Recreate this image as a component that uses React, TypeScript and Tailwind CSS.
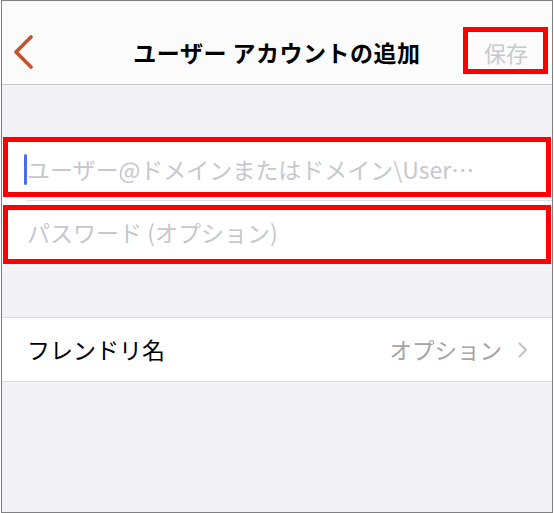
const jp = { fontFamily: '"Noto Sans CJK JP", "Noto Sans", sans-serif' };

function Header() {
  return (
    <div className="h-[84px] shrink-0 bg-[#fbfbfc] border-b border-[#c8c7cc] pt-[20px]">
      <div className="relative h-[62px] flex items-center justify-center">
        <svg
          className="absolute left-[10px] top-[14px]"
          width="24"
          height="34"
          viewBox="0 0 24 34"
          fill="none"
        >
          <polyline
            points="19,2 4,17 19,32"
            stroke="#c4522d"
            strokeWidth="3.6"
            strokeLinecap="round"
            strokeLinejoin="round"
          />
        </svg>
        <h1 className="text-[23px] font-bold text-black tracking-[0.5px]">ユーザー アカウントの追加</h1>
        <span className="absolute right-[24px] text-[22px] text-[#c9c9cc]">保存</span>
      </div>
    </div>
  );
}

export default function App() {
  return (
    <div lang="ja" className="w-[554px] h-[513px] bg-white" style={jp}>
      <div className="relative ml-px w-[552px] h-[513px] border border-[#808080] bg-[#f2f2f7] flex flex-col overflow-hidden">
        <Header />

        <div className="mt-[53px] bg-white">
          <div className="h-[62px] flex items-center pl-[22px] pr-[24px]">
            <div className="w-[3px] h-[31px] rounded-sm bg-[#4a6cf5]" />
            <span className="text-[23px] text-[#c7c7cd] whitespace-nowrap">ユーザー@ドメインまたはドメイン\User⋯</span>
          </div>
          <div className="ml-[24px] h-px bg-[#e0e0e3]" />
          <div className="h-[62px] flex items-center pl-[25px] pr-[24px]">
            <span className="text-[23px] text-[#c7c7cd]">パスワード (オプション)</span>
          </div>
        </div>
        <div className="h-px bg-[#dcdce0]" />

        <div className="mt-[53px] h-px bg-[#dcdce0]" />
        <div className="h-[63px] bg-white flex items-center justify-between pl-[25px] pr-[24px]">
          <span className="text-[23px] text-black">フレンドリ名</span>
          <div className="flex items-center gap-[16px]">
            <span className="text-[22.5px] text-[#a4a4a9]">オプション</span>
            <svg width="10" height="16" viewBox="0 0 10 16" fill="none">
              <polyline
                points="1.5,1.5 8,8 1.5,14.5"
                stroke="#c4c4c9"
                strokeWidth="2.2"
                strokeLinecap="round"
                strokeLinejoin="round"
              />
            </svg>
          </div>
        </div>
        <div className="h-px bg-[#dcdce0]" />

        {/* red annotation frames */}
        <div className="absolute left-[461px] top-[26px] w-[85px] h-[47px] border-[5px] border-[#ff0000]" />
        <div className="absolute left-[1px] top-[136px] w-[548px] h-[60px] border-[5px] border-[#ff0000]" />
        <div className="absolute left-[1px] top-[204px] w-[548px] h-[59px] border-[5px] border-[#ff0000]" />
      </div>
    </div>
  );
}
